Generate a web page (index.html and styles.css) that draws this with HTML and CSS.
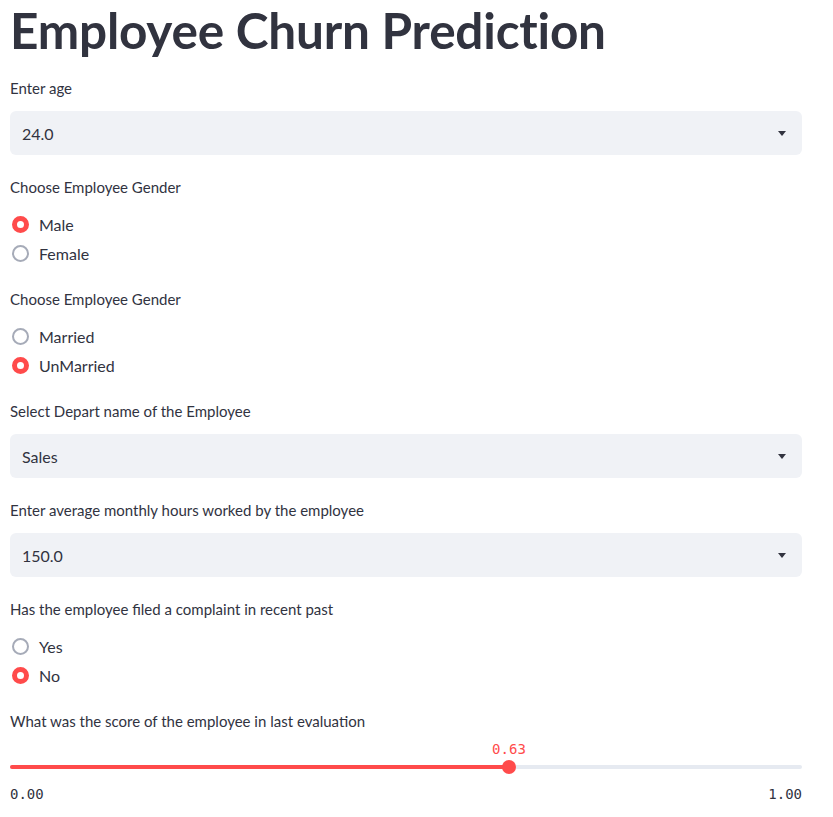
FILE: index.html
```html
<!DOCTYPE html>
<html>
<head>
<meta charset="utf-8">
<link rel="stylesheet" href="styles.css">
</head>
<body>
<main class="app">
  <h1 class="title">Employee Churn Prediction</h1>

  <section class="widget select-widget">
    <div class="label">Enter age</div>
    <div class="select"><span class="select-value">24.0</span><span class="caret"></span></div>
  </section>

  <section class="widget radio-widget">
    <div class="label">Choose Employee Gender</div>
    <div class="radio-group">
      <div class="radio checked"><span class="dot"></span><span class="radio-text">Male</span></div>
      <div class="radio"><span class="dot"></span><span class="radio-text">Female</span></div>
    </div>
  </section>

  <section class="widget radio-widget">
    <div class="label">Choose Employee Gender</div>
    <div class="radio-group">
      <div class="radio"><span class="dot"></span><span class="radio-text">Married</span></div>
      <div class="radio checked"><span class="dot"></span><span class="radio-text">UnMarried</span></div>
    </div>
  </section>

  <section class="widget select-widget">
    <div class="label">Select Depart name of the Employee</div>
    <div class="select"><span class="select-value">Sales</span><span class="caret"></span></div>
  </section>

  <section class="widget select-widget">
    <div class="label">Enter average monthly hours worked by the employee</div>
    <div class="select"><span class="select-value">150.0</span><span class="caret"></span></div>
  </section>

  <section class="widget radio-widget">
    <div class="label">Has the employee filed a complaint in recent past</div>
    <div class="radio-group">
      <div class="radio"><span class="dot"></span><span class="radio-text">Yes</span></div>
      <div class="radio checked"><span class="dot"></span><span class="radio-text">No</span></div>
    </div>
  </section>

  <section class="widget slider-widget">
    <div class="label">What was the score of the employee in last evaluation</div>
    <div class="slider">
      <div class="slider-value-row"><span class="slider-value" style="left: 63%">0.63</span></div>
      <div class="track"><div class="fill" style="width: 63%"></div><span class="thumb" style="left: 63%"></span></div>
      <div class="ticks"><span>0.00</span><span>1.00</span></div>
    </div>
  </section>
</main>
</body>
</html>
```

FILE: styles.css
```css
* { box-sizing: border-box; }
html, body { margin: 0; padding: 0; background: #ffffff; }
body {
  font-family: "Lato", "Liberation Sans", sans-serif;
  color: #31333f;
  overflow: hidden;
}
.app {
  width: 833px;
  padding: 0 31px 0 10px;
  display: flex;
  flex-direction: column;
}
.title {
  margin: 0 0 -4px 0;
  font-size: 49.5px;
  font-weight: 700;
  line-height: 60px;
  height: 60px;
  letter-spacing: -0.2px;
  color: #31333f;
  white-space: nowrap;
}
.widget { display: flex; flex-direction: column; }
.label {
  font-size: 15px;
  line-height: 24px;
  height: 24px;
}
.select-widget { margin-top: 20px; }
.select-widget .label { margin-bottom: 11px; }
.select {
  height: 44px;
  background: #f0f2f6;
  border-radius: 6px;
  display: flex;
  align-items: center;
  justify-content: space-between;
  padding: 0 16px 0 12px;
}
.select-value { font-size: 16px; }
.caret {
  width: 0; height: 0;
  border-left: 4.5px solid transparent;
  border-right: 4.5px solid transparent;
  border-top: 5px solid #31333f;
  margin-top: 1px;
}
.radio-widget { margin-top: 20px; }
.radio-group { display: flex; flex-direction: column; margin-top: 11px; margin-bottom: -1px; }
.radio {
  height: 29px;
  display: flex;
  align-items: center;
}
.dot {
  width: 17px; height: 17px;
  border-radius: 50%;
  border: 2px solid #a6abb8;
  margin: 0 10px 0 2px;
  background: #fff;
  flex: none;
}
.radio.checked .dot {
  border: 5.5px solid #ff4b4b;
  background: #fff;
}
.radio-text { font-size: 16px; }
.slider-widget { margin-top: 20px; }
.slider { position: relative; }
.slider-value-row { position: relative; height: 26px; margin-top: 6px; }
.slider-value {
  position: absolute;
  top: 0;
  transform: translateX(-50%);
  font-family: "DejaVu Sans Mono", monospace;
  font-size: 14px;
  color: #ff4b4b;
  line-height: 20px;
}
.track {
  position: relative;
  height: 4px;
  background: #e6eaf1;
  border-radius: 2px;
}
.fill { height: 4px; background: #ff4b4b; border-radius: 2px; }
.thumb {
  position: absolute;
  top: -5px;
  width: 14px; height: 14px;
  margin-left: -7px;
  border-radius: 50%;
  background: #ff4b4b;
}
.ticks {
  display: flex;
  justify-content: space-between;
  font-family: "DejaVu Sans Mono", monospace;
  font-size: 14px;
  line-height: 20px;
  margin-top: 15px;
}
```
